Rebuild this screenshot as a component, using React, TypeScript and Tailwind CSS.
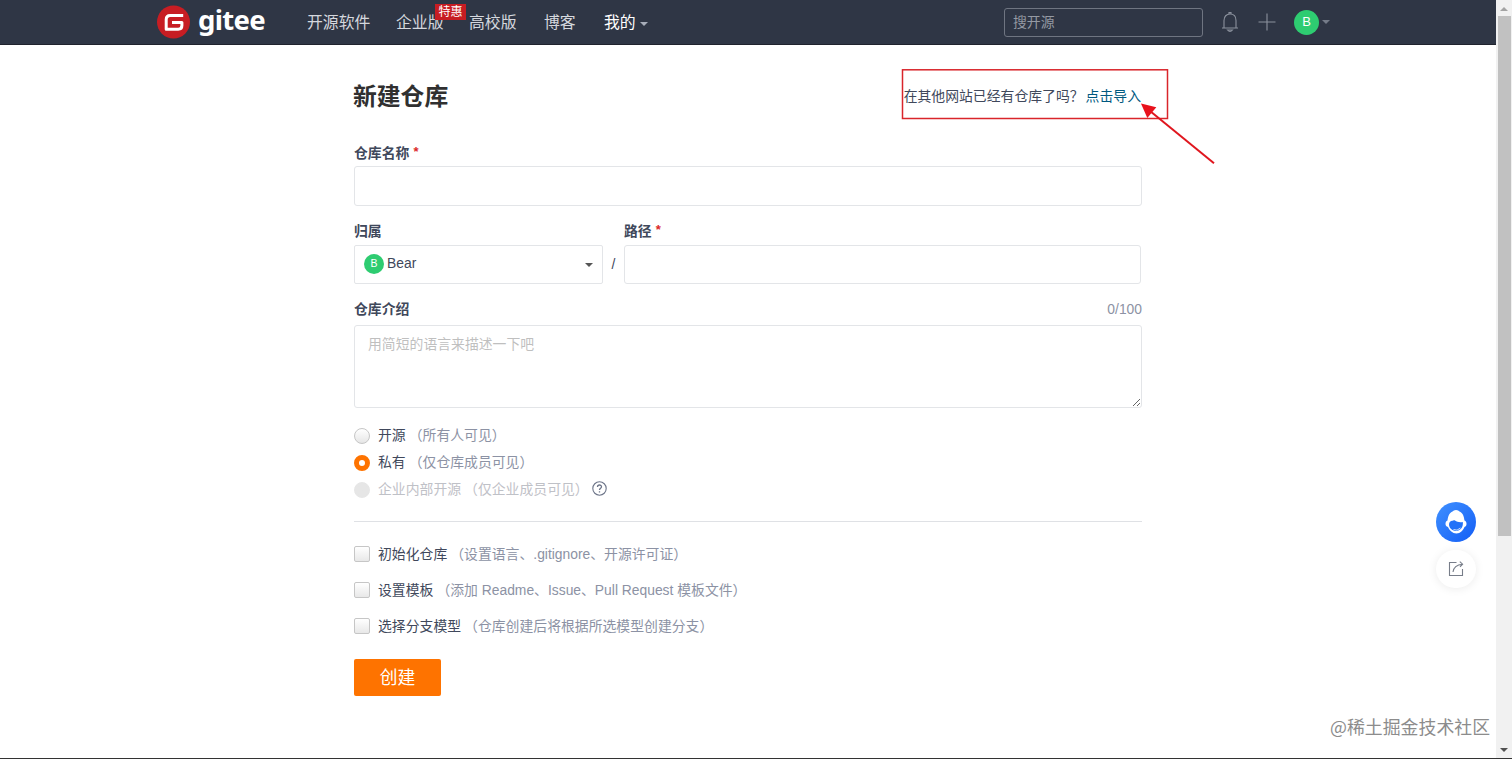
import { useState } from 'react'

const visibilityOptions = [
  { id: 'public', label: '开源', hint: '（所有人可见）', disabled: false },
  { id: 'private', label: '私有', hint: '（仅仓库成员可见）', disabled: false },
  { id: 'inner', label: '企业内部开源', hint: '（仅企业成员可见）', disabled: true },
]

const setupOptions = [
  { id: 'init', label: '初始化仓库', hint: '（设置语言、.gitignore、开源许可证）' },
  { id: 'template', label: '设置模板', hint: '（添加 Readme、Issue、Pull Request 模板文件）' },
  { id: 'branch', label: '选择分支模型', hint: '（仓库创建后将根据所选模型创建分支）' },
]

function Logo() {
  return (
    <a className="flex w-[107px] items-center">
      <svg className="shrink-0" width="33" height="34" viewBox="0 0 33 34" fill="none">
        <circle cx="16.5" cy="17" r="16.5" fill="#c71d23" />
        <path d="M26.2 10.5H13.2Q9.2 10.500 9.200 14.500V24.200H21.200Q24.900 24.200 24.900 20.500V17.500H15" stroke="#fff" strokeWidth="3" strokeLinejoin="round" />
      </svg>
      <span className="ml-2 h-[34px] font-['Noto_Sans','Open_Sans',sans-serif] text-[27.5px] leading-[30px] font-bold tracking-[-0.7px] text-white">gitee</span>
    </a>
  )
}

function Header() {
  return (
    <header className="flex h-[45px] items-center border-b border-[#20232d] bg-[#2f3645] pl-[157px] text-[15.85px] text-[#d5d8de]">
      <Logo />
      <nav className="mt-[2px] ml-[43px] flex items-center whitespace-nowrap">
        <a className="w-[89px]">开源软件</a>
        <a className="relative w-[73px]">
          企业版
          <span className="absolute -top-[7px] left-[39px] flex h-4 w-[31px] items-center justify-center bg-[#c71d23] text-[12px] text-white">特惠</span>
        </a>
        <a className="w-[75px]">高校版</a>
        <a className="w-[60px]">博客</a>
        <a className="flex items-center text-white">
          我的
          <span className="mt-[3px] ml-[4px] border-x-[4px] border-t-[4px] border-x-transparent border-t-[#a7adb9]" />
        </a>
      </nav>
      <input placeholder="搜开源" className="mr-[17px] ml-auto h-[29px] w-[199px] rounded-[3px] border border-[#6f7581] px-2 text-[13.85px] placeholder:text-[#9499a3]" />
      <svg width="20" height="22" viewBox="0 0 20 22" fill="none" stroke="#8b919d" strokeWidth="1.1">
        <path d="M2 17H18M4 17V9.5C4 5.5 6.4 3 10 3S16 5.500 16 9.500V17" />
        <path d="M9 3V1.600H11V3M7.500 19Q10 21.800 12.500 19Z" />
      </svg>
      <svg className="ml-[18px]" width="18" height="18" viewBox="0 0 18 18" stroke="#8b919d" strokeWidth="1.100">
        <path d="M9 .5V17.5M.5 9H17.500" />
      </svg>
      <span className="ml-[18px] flex h-[25px] w-[25px] items-center justify-center rounded-full bg-[#2ecc71] text-[13px] text-white">B</span>
      <span className="mr-[166px] ml-[3px] border-x-[4px] border-t-[4px] border-x-transparent border-t-[#747b88]" />
    </header>
  )
}

function FieldLabel({ text, required }: { text: string; required?: boolean }) {
  return (
    <label className="flex h-6 items-center font-semibold text-[#40485b]">
      {text}
      {required && <span className="mb-[2px] ml-[4px] text-[13px] text-[#db2828]">*</span>}
    </label>
  )
}

function NewRepoForm() {
  const [visibility, setVisibility] = useState('private')
  const [intro, setIntro] = useState('')

  return (
    <main className="ml-[354px] w-[788px] pt-[34px]">
      <div className="flex h-9 items-center justify-between">
        <h1 className="-ml-px text-[23.8px] font-semibold text-[#303030]">新建仓库</h1>
        <p className="mr-px mb-[2px] text-[#40485b]">
          在其他网站已经有仓库了吗？<a className="ml-[2px] text-[#005980]">点击导入</a>
        </p>
      </div>

      <div className="mt-[26px]">
        <FieldLabel text="仓库名称" required />
        <input className="mt-px block h-10 w-full rounded-[3px] border border-[#e3e5e8] px-3.5" />
      </div>

      <div className="mt-[13px] flex">
        <div className="w-[249px]">
          <FieldLabel text="归属" />
          <div className="mt-[2px] flex h-[39px] items-center rounded-[2px] border border-[#e3e5e8] px-[9px]">
            <span className="mb-px flex h-5 w-5 items-center justify-center rounded-full bg-[#2ecc71] text-[10.5px] text-white">B</span>
            <span className="mb-[3px] ml-[3px] text-[#40485b]">Bear</span>
            <span className="mt-px ml-auto border-x-[4px] border-t-[4px] border-x-transparent border-t-[#555]" />
          </div>
        </div>
        <span className="mt-[26px] flex h-[39px] w-[21px] items-center justify-center text-[#40485b]">/</span>
        <div className="w-[517px]">
          <FieldLabel text="路径" required />
          <input className="mt-[2px] block h-[39px] w-full rounded-[3px] border border-[#e3e5e8] px-3.5" />
        </div>
      </div>

      <div className="mt-[13px]">
        <div className="flex items-center justify-between">
          <FieldLabel text="仓库介绍" />
          <span className="text-[#8c92a4]">{intro.length}/100</span>
        </div>
        <textarea
          value={intro}
          onChange={(event) => setIntro(event.target.value)}
          maxLength={100}
          placeholder="用简短的语言来描述一下吧"
          className="mt-1 block h-[83px] w-full rounded-[3px] border border-[#e3e5e8] px-[13px] py-2 leading-5 placeholder:text-[#bfbfbf]"
        />
      </div>

      <div className="mt-3.5">
        {visibilityOptions.map((option) => (
          <label key={option.id} className={`flex h-[27px] items-center ${option.disabled ? 'text-[#bfc1c7]' : 'text-[#40485b]'}`}>
            <input
              type="radio"
              name="visibility"
              disabled={option.disabled}
              checked={visibility === option.id}
              onChange={() => setVisibility(option.id)}
              className="mt-px h-4 w-4 appearance-none rounded-full border border-[#c6c6c6] bg-linear-to-b from-white to-[#e6e6e6] checked:border-[5px] checked:border-[#fe7300] checked:from-white checked:to-white disabled:border-[#e6e6e6] disabled:from-[#e6e6e6]"
            />
            <span className="ml-2">{option.label}</span>
            <span className={`ml-[3px] ${option.disabled ? '' : 'text-[#8c92a4]'}`}>{option.hint}</span>
            {option.disabled && (
              <svg className="mb-[3px] ml-[3px]" width="15" height="15" viewBox="0 0 15 15" fill="none" stroke="#6d7589" strokeWidth="1.1">
                <circle cx="7.5" cy="7.5" r="6.700" />
                <path d="M5.500 6C5.500 3.300 9.500 3.400 9.500 5.800C9.500 7.300 7.500 7.200 7.500 9M7.500 10.200V11.500" strokeWidth="1.300" />
              </svg>
            )}
          </label>
        ))}
      </div>

      <hr className="mt-[18px] h-px border-0 bg-[#dfe1e5]" />

      <div className="mt-3.5">
        {setupOptions.map((option) => (
          <label key={option.id} className="flex h-9 items-center text-[#40485b]">
            <input type="checkbox" className="h-4 w-4 appearance-none rounded-[2px] border border-[#c6c6c6] bg-linear-to-b from-white to-[#e8e8e8]" />
            <span className="ml-2">{option.label}</span>
            <span className="ml-[3px] text-[#8c92a4]">{option.hint}</span>
          </label>
        ))}
      </div>

      <button className="mt-[15px] block h-[37px] w-[87px] rounded-[2px] bg-[#fe7300] pt-px text-[17.8px] text-white">创建</button>
    </main>
  )
}

// Red box and arrow pointing at the import link
function ImportCallout() {
  return (
    <svg className="pointer-events-none absolute top-[60px] left-[890px]" width="340" height="120" viewBox="0 0 340 120" fill="none">
      <rect x="12.500" y="9.800" width="265" height="48.700" stroke="#d9252b" strokeWidth="1.500" />
      <path d="M260 51L324 103.300" stroke="#e0161e" strokeWidth="2" />
      <path d="M251 43.500L266.300 47.300L257.300 58Z" fill="#e8121c" />
    </svg>
  )
}

function FloatingTools() {
  return (
    <div className="absolute top-[502px] left-[1436px] flex flex-col gap-2">
      <span className="flex h-10 w-10 items-center justify-center rounded-full bg-linear-to-br from-[#4090ff] to-[#145cf5]">
        <svg width="24" height="26" viewBox="0 0 24 26">
          <path d="M12 1C10 1 9.500 2 8.500 2.500C4.500 4.500 4 8 3.500 11.500C.8 12.500 .8 17.500 4 18C5.500 21.500 8.500 24.500 12.500 24.500S19 21.500 20.500 18C23.200 17.500 23.200 12.500 20.500 11.500C20 8 19.500 4.500 15.500 2.500C14.500 2 14 1 12 1Z" fill="#fff" />
          <path d="M5 16C5 13.500 6 12 8 11.800C9.500 11.600 10 10.800 11 11.500C13 13 15.500 13.500 18.800 13C19.500 18 16.500 21.500 12.500 22C8.500 22 5.500 19.500 5 16Z" fill="#2372f8" />
          <path d="M9.500 20.500Q13 22.500 16.500 19" fill="none" stroke="#cfe0ff" />
        </svg>
      </span>
      <span className="flex h-[38px] w-10 items-center justify-center rounded-full bg-white shadow-[0_1px_10px_rgba(0,0,0,0.08)]">
        <svg width="16" height="16" viewBox="0 0 16 16" fill="none" stroke="#777d89" strokeWidth="1.100">
          <path d="M8.500 1.500H1.500V14.500H14.500V8" />
          <path d="M5 11C5.500 6.500 8 3.800 14.500 3.200M11.800 .700L14.600 3.200L12 5.800" />
        </svg>
      </span>
    </div>
  )
}

function Scrollbar() {
  return (
    <div className="flex w-4 flex-col items-center bg-[#f1f1f1]">
      <span className="mt-[7px] border-x-[4px] border-b-[4px] border-x-transparent border-b-[#a3a3a3]" />
      <span className="mt-[5px] h-[520px] w-[13px] bg-[#c1c1c1]" />
      <span className="mt-auto mb-[6px] border-x-[4px] border-t-[4px] border-x-transparent border-t-[#505050]" />
    </div>
  )
}

export default function App() {
  return (
    <div className="relative flex h-[759px] w-[1512px] overflow-hidden border-b border-[#333] bg-white font-['Liberation_Sans','Noto_Sans_CJK_SC',sans-serif] text-[13.85px] whitespace-nowrap">
      <div className="flex-1">
        <Header />
        <NewRepoForm />
      </div>
      <Scrollbar />
      <ImportCallout />
      <FloatingTools />
      <span className="absolute top-[713px] left-[1330px] font-['Noto_Sans_CJK_SC',sans-serif] text-[17.9px] leading-[26px] text-[#8c8c8c]">@稀土掘金技术社区</span>
    </div>
  )
}
